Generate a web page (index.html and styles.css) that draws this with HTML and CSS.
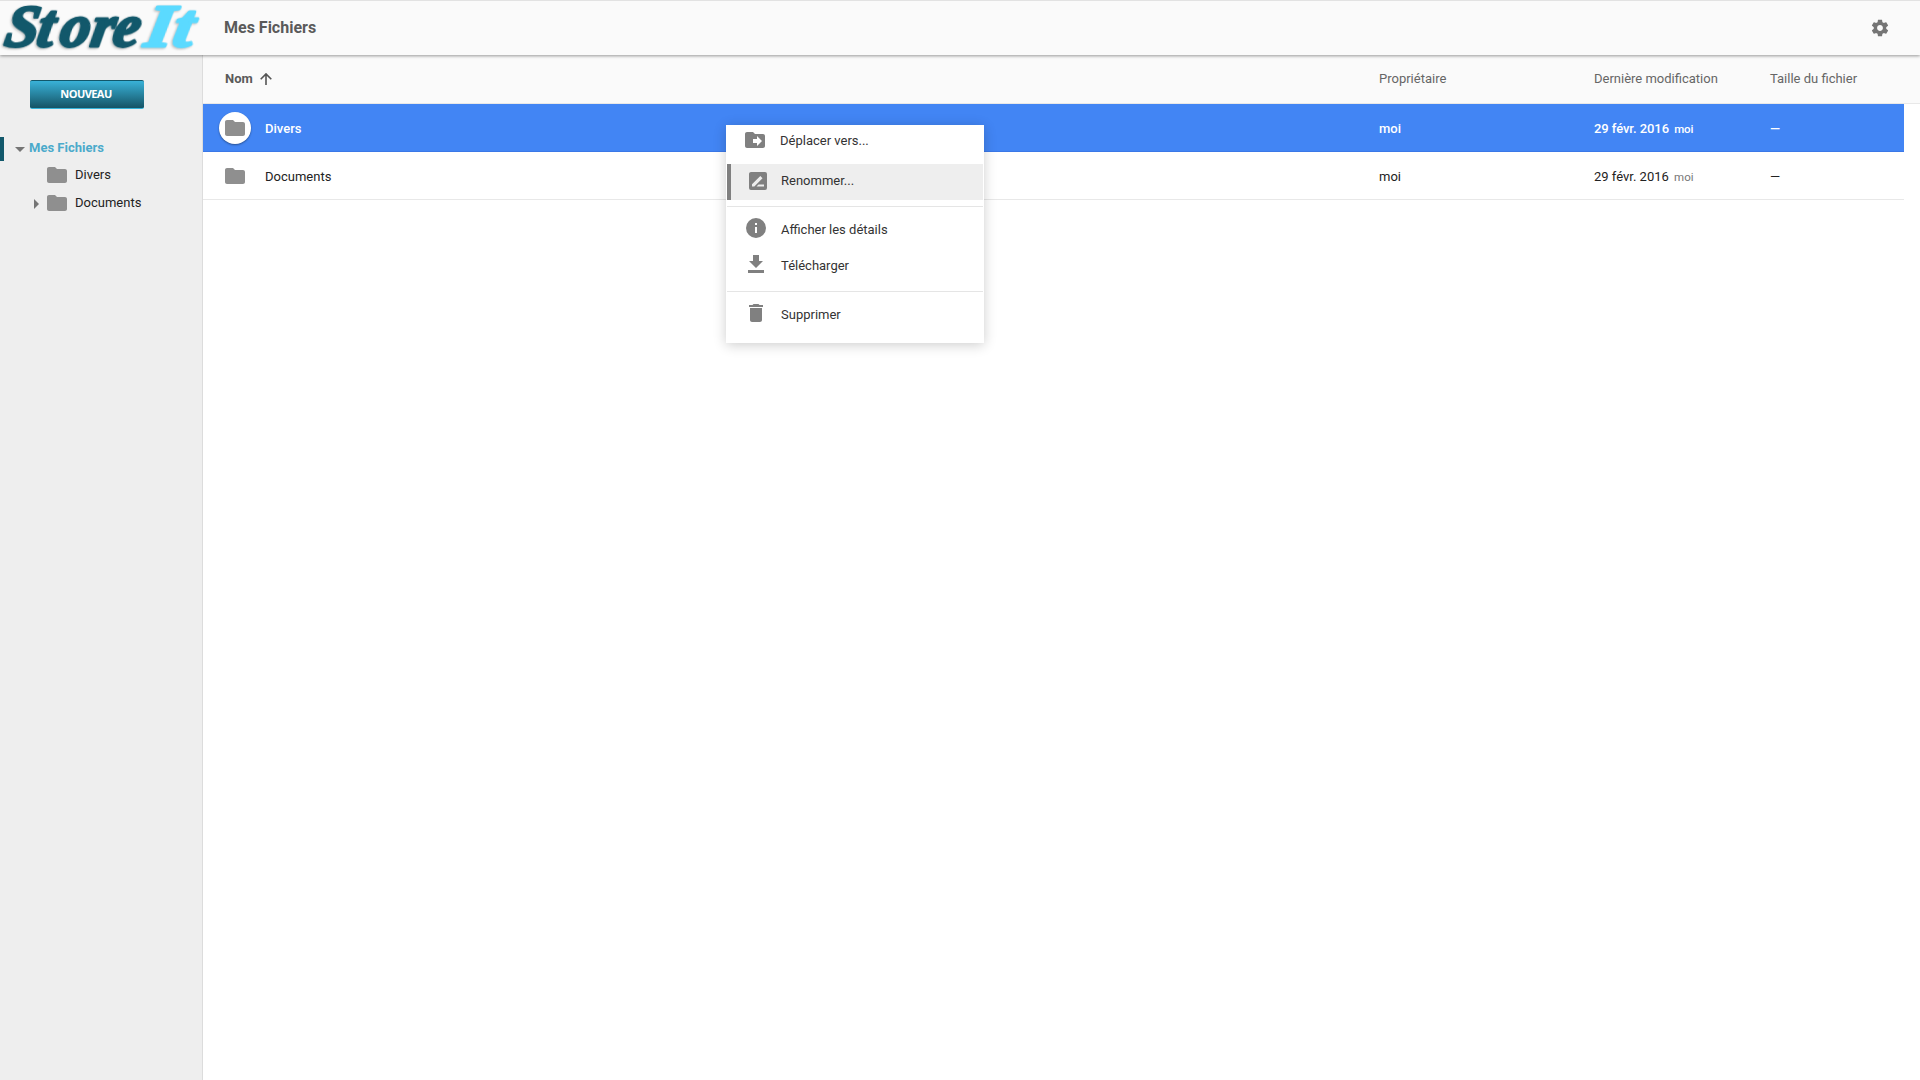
FILE: index.html
```html
<!DOCTYPE html>
<html lang="fr">
<head>
<meta charset="utf-8">
<title>StoreIt</title>
<link rel="stylesheet" href="styles.css">
</head>
<body>
<svg class="defs" width="0" height="0">
  <symbol id="folder" viewBox="0 0 20 16"><path d="M8 0H2C.9 0 0 .9 0 2v12c0 1.100.9 2 2 2h16c1.100 0 2-.9 2-2V4c0-1.100-.9-2-2-2h-8z"/></symbol>
</svg>
<header class="topbar">
  <svg class="logo" width="203" height="54" viewBox="0 0 203 54" aria-label="StoreIt">
    <g class="logo-text" transform="translate(9 0) skewX(-10)">
      <text class="logo-store" x="2 34 57 88 110" y="45.500">Store</text>
      <text class="logo-it" x="142" y="45.500" textLength="48" lengthAdjust="spacingAndGlyphs">It</text>
    </g>
  </svg>
  <h1 class="title">Mes Fichiers</h1>
  <svg class="gear" width="20" height="20" viewBox="0 0 24 24"><path d="M19.430 12.980c.04-.32.070-.64.070-.98s-.03-.66-.07-.98l2.110-1.650c.19-.15.240-.42.120-.64l-2-3.460c-.12-.22-.39-.3-.61-.22l-2.490 1c-.52-.4-1.080-.73-1.690-.98l-.38-2.650C14.460 2.180 14.250 2 14 2h-4c-.25 0-.46.180-.49.420l-.38 2.650c-.61.250-1.170.59-1.690.98l-2.490-1c-.23-.09-.49 0-.61.220l-2 3.460c-.13.220-.07.490.12.640l2.110 1.650c-.04.32-.07.650-.07.980s.03.660.07.980l-2.110 1.650c-.19.150-.24.420-.12.640l2 3.460c.12.220.39.300.61.220l2.490-1c.52.400 1.080.730 1.690.980l.38 2.650c.03.240.24.420.49.420h4c.25 0 .46-.18.490-.42l.38-2.650c.61-.25 1.170-.59 1.690-.98l2.490 1c.23.090.49 0 .61-.22l2-3.460c.12-.22.070-.49-.12-.64l-2.110-1.650zM12 15.500c-1.930 0-3.500-1.570-3.500-3.500s1.570-3.500 3.500-3.500 3.500 1.570 3.500 3.500-1.570 3.500-3.500 3.500z"/></svg>
</header>
<div class="layout">
  <aside class="sidebar">
    <button class="new">NOUVEAU</button>
    <nav class="tree">
      <div class="node root"><svg class="caret-down" width="10" height="5"><path d="M0 0h10L5 5z"/></svg><span>Mes Fichiers</span></div>
      <div class="node"><svg class="caret" width="5" height="10"></svg><svg class="folder" width="20" height="16"><use href="#folder"/></svg><span>Divers</span></div>
      <div class="node"><svg class="caret" width="5" height="10"><path d="M0 0v10l5-5z"/></svg><svg class="folder" width="20" height="16"><use href="#folder"/></svg><span>Documents</span></div>
    </nav>
  </aside>
  <main class="files">
    <div class="row head">
      <div class="name">Nom <svg class="sort" width="12" height="12" viewBox="0 0 12 12"><path d="M6 12V1M.7 6.200 6 .9l5.300 5.300"/></svg></div>
      <div>Propriétaire</div><div>Dernière modification</div><div>Taille du fichier</div>
    </div>
    <div class="row selected">
      <div class="name"><span class="badge"><svg class="folder" width="20" height="16"><use href="#folder"/></svg></span><span class="cell">Divers</span></div>
      <div class="cell">moi</div><div class="cell date">29 févr. 2016 <small>moi</small></div><div class="cell">—</div>
    </div>
    <div class="row">
      <div class="name"><span class="badge"><svg class="folder" width="20" height="16"><use href="#folder"/></svg></span><span class="cell">Documents</span></div>
      <div class="cell">moi</div><div class="cell">29 févr. 2016 <small>moi</small></div><div class="cell">—</div>
    </div>
  </main>
</div>
<div class="menu">
  <div class="item move"><svg width="20" height="16" viewBox="0 0 20 16"><path fill-rule="evenodd" d="M8 0H2C.9 0 0 .9 0 2v12c0 1.100.9 2 2 2h16c1.100 0 2-.9 2-2V4c0-1.100-.9-2-2-2h-8zM12 14v-3H8V7h4V4l5 5z"/></svg><span>Déplacer vers...</span></div>
  <div class="item hover"><svg width="18" height="18" viewBox="0 0 18 18"><path fill-rule="evenodd" d="M2 0h14a2 2 0 0 1 2 2v14a2 2 0 0 1-2 2H2a2 2 0 0 1-2-2V2C0 .9.9 0 2 0zM3 14.500h2.300l8.200-8.200L11.300 3.900 3 12.200zM7.500 14.500H15v-2H9.500z"/></svg><span>Renommer...</span></div>
  <div class="sep"></div>
  <div class="item"><svg width="20" height="20" viewBox="0 0 20 20"><path d="M10 0a10 10 0 1 0 0 20 10 10 0 0 0 0-20zm1 15H9V9h2zm0-8H9V5h2z"/></svg><span>Afficher les détails</span></div>
  <div class="item"><svg width="20" height="18" viewBox="0 0 20 18"><path d="M7 0h6v6h4l-7 7-7-7h4zM2 15h16v3H2z"/></svg><span>Télécharger</span></div>
  <div class="sep second"></div>
  <div class="item"><svg width="20" height="18" viewBox="0 0 20 18"><path d="M4 16c0 1.100.9 2 2 2h8c1.100 0 2-.9 2-2V4H4zM17 1h-3.500l-1-1h-5l-1 1H3v2h14z"/></svg><span>Supprimer</span></div>
</div>
</body>
</html>
```
FILE: styles.css
```css
* { box-sizing: border-box; }
body {
  margin: 0;
  height: 1080px;
  display: flex;
  flex-direction: column;
  overflow: hidden;
  font: 13px/16px Roboto, sans-serif;
  color: #222;
  background: #fff;
}
svg { display: block; flex: none; }
.defs { position: absolute; }

.topbar {
  height: 55px;
  flex: none;
  display: flex;
  align-items: center;
  padding-right: 30px;
  border-top: 1px solid #e2e2e2;
  background: #fafafa;
  box-shadow: 0 1px 3px rgba(0, 0, 0, .4);
  z-index: 1;
}
.logo { margin-right: 21px; overflow: visible; }
.logo-text {
  font-family: "Liberation Serif", serif;
  font-size: 60px;
  font-weight: 700;
  font-style: italic;
  stroke-width: 2.8;
  stroke-linejoin: round;
  filter: drop-shadow(-1px 1px 1px rgba(0, 0, 0, .25));
}
.logo-store { fill: #12586b; stroke: #12586b; }
.logo-it { fill: #5bdaff; stroke: #5bdaff; }
.title { margin: 0 auto 0 0; font-size: 16px; line-height: 20px; font-weight: 700; color: #5a5a5a; }
.gear { fill: #757575; }

.layout { flex: 1; display: flex; min-height: 0; }
.sidebar { width: 203px; flex: none; padding-top: 25px; background: #eee; border-right: 1px solid #dcdcdc; }
.new {
  display: block;
  width: 114px;
  height: 29px;
  margin-left: 30px;
  padding: 0 2px 2px 0;
  border: 0;
  border-top: 1px solid #12586b;
  border-bottom: 1px solid #35b2d8;
  border-radius: 2px;
  background: linear-gradient(#39b2d8, #155365);
  color: #fff;
  font: 700 11px/25px "Open Sans", sans-serif;
  letter-spacing: -.55px;
}
.tree { margin-top: 28px; }
.node { display: flex; align-items: center; height: 28px; padding-left: 34px; }
.node .folder { margin: 0 8px; }
.node.root { height: 24px; padding-left: 11px; border-left: 4px solid #12586b; gap: 4px; color: #4baacb; font-weight: 700; }
.root span { padding-bottom: 2px; }
.caret-down, .caret { fill: #757575; }
.caret-down { margin-top: 1px; }
.caret { margin-top: 2px; }
.folder { fill: #8f8f8f; }

.files { flex: 1; }
.row {
  display: grid;
  grid-template-columns: 1154px 215px 176px 1fr;
  align-items: center;
  height: 48px;
  margin-right: 16px;
  padding-left: 22px;
  border-bottom: 1px solid #e8e8e8;
}
.row.head { height: 49px; margin-right: 0; background: #fafafa; color: #666; }
.name { display: flex; align-items: center; }
.row:not(.head) .name { margin-left: -6px; }
.head .name { font-weight: 700; color: #5a5a5a; }
.cell { padding-top: 2px; }
.sort { margin-left: 7px; fill: none; stroke: #555; stroke-width: 1.6; }
.badge { display: flex; align-items: center; justify-content: center; width: 32px; height: 32px; margin-right: 14px; border-radius: 50%; }
small { margin-left: 2px; font-size: 11.5px; color: #777; }
.selected { background: #4285f4; border-color: #3b78e7; color: #fff; font-weight: 500; }
.selected .date { letter-spacing: -.07px; }
.selected .badge { background: #fff; box-shadow: 0 1px 2px rgba(0, 0, 0, .4); }
.selected small { color: #fff; }

.menu {
  position: absolute;
  left: 726px;
  top: 125px;
  width: 258px;
  height: 218px;
  padding: 0 1px;
  z-index: 2;
  background: #fff;
  color: #333;
  box-shadow: 0 2px 12px rgba(0, 0, 0, .2);
}
.item { display: flex; align-items: center; gap: 15px; height: 36px; padding-left: 19px; fill: #808080; }
.item svg { margin-bottom: 2px; }
.item span { padding-top: 2px; }
.item.move { height: 30px; margin-bottom: 9px; padding-left: 18px; }
.item.move svg { margin-bottom: 0; }
.item.hover { padding-left: 18px; gap: 14px; border-left: 4px solid #808080; background: #eee; }
.item.hover span { padding: 0 0 2px; }
.sep { height: 1px; margin: 6px 0 4px; background: #e5e5e5; }
.sep.second { margin-top: 8px; }
```
